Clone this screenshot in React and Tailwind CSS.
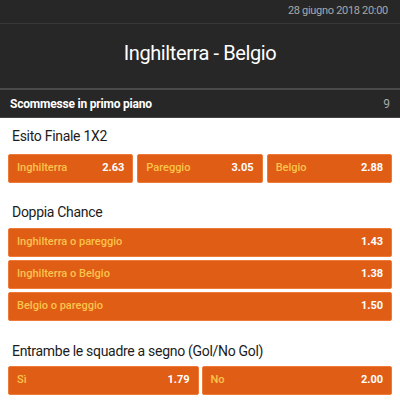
import React from "react";

const font = { fontFamily: "Roboto, 'Noto Sans', Arial, sans-serif" };

function Btn({ label, value, className = "" }) {
  return (
    <div
      className={`flex items-center justify-between h-[29px] px-[8px] bg-[#e05d16] border border-[#ee7a3a] rounded-[2px] ${className}`}
    >
      <span className="text-[11px] text-[#fbc44a] font-medium">{label}</span>
      <span className="text-[11px] text-white font-bold">{value}</span>
    </div>
  );
}

export default function App() {
  return (
    <div className="w-[400px] h-[405px] bg-white overflow-hidden" style={font}>
      <div className="bg-[#272727]">
        <div className="h-[24px] flex items-center justify-end pr-[12px] border-b border-[#383838]">
          <span className="text-[11px] tracking-[-0.3px] text-[#a8a8a8]">28 giugno 2018 20:00</span>
        </div>
        <div className="h-[66px] flex items-center justify-center pb-[6px] border-b-2 border-[#4a4a4a]">
          <span className="text-[20px] tracking-[-0.4px] text-white">Inghilterra - Belgio</span>
        </div>
        <div className="h-[28px] flex items-center justify-between px-[10px] border-b border-[#444]">
          <span className="text-[12px] tracking-[-0.2px] text-white font-bold">Scommesse in primo piano</span>
          <span className="text-[12px] text-[#a8a8a8]">9</span>
        </div>
      </div>

      <div className="px-[8px]">
        <div className="mt-[8px] h-[20px] flex items-center pl-[4px] text-[14px] tracking-[-0.3px] text-[#1c1c1c]">
          Esito Finale 1X2
        </div>
        <div className="mt-[8px] grid grid-cols-3 gap-[4px]">
          <Btn label="Inghilterra" value="2.63" />
          <Btn label="Pareggio" value="3.05" />
          <Btn label="Belgio" value="2.88" />
        </div>

        <div className="mt-[19px] h-[20px] flex items-center pl-[4px] text-[14px] tracking-[-0.3px] text-[#1c1c1c]">
          Doppia Chance
        </div>
        <div className="mt-[6px] flex flex-col gap-[3px]">
          <Btn label="Inghilterra o pareggio" value="1.43" />
          <Btn label="Inghilterra o Belgio" value="1.38" />
          <Btn label="Belgio o pareggio" value="1.50" />
        </div>

        <div className="mt-[20px] h-[20px] flex items-center pl-[4px] text-[14px] tracking-[-0.3px] text-[#1c1c1c]">
          Entrambe le squadre a segno (Gol/No Gol)
        </div>
        <div className="mt-[5px] grid grid-cols-2 gap-[3px]">
          <Btn label="Sì" value="1.79" />
          <Btn label="No" value="2.00" />
        </div>
      </div>
    </div>
  );
}
